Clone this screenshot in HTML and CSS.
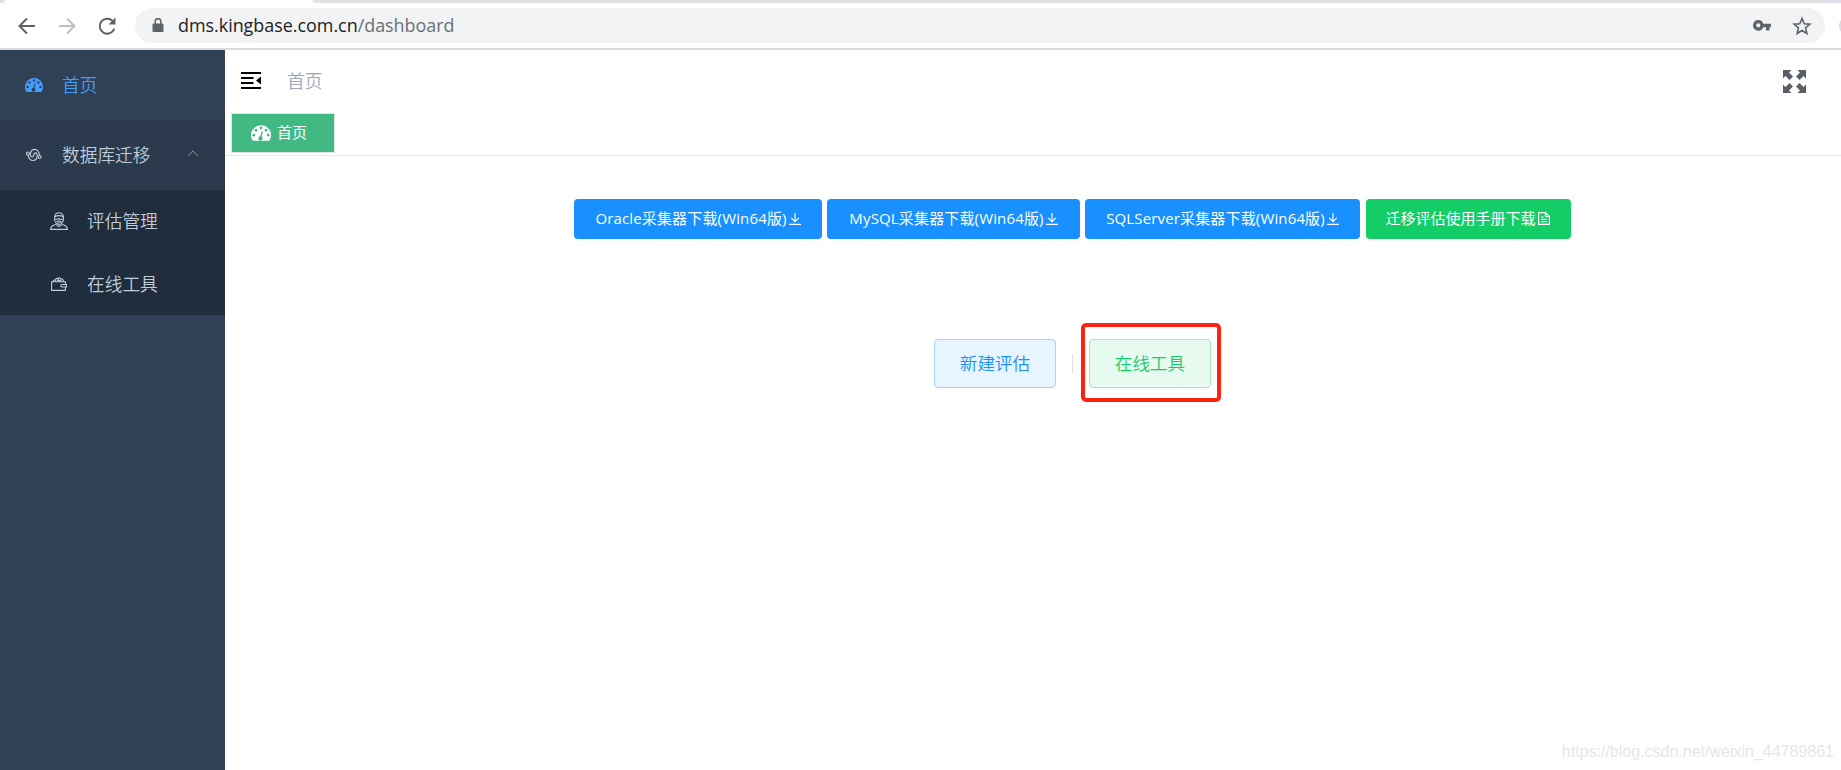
FILE: index.html
```
<!DOCTYPE html>
<html lang="zh-CN">
<head>
  <meta charset="UTF-8">
  <title>首页</title>
  <link rel="stylesheet" href="styles.css">
</head>
<body>

  <!-- shared icons -->
  <svg class="sprite" width="0" height="0">
    <symbol id="dashboard" viewBox="0 0 128 100">
      <path fill="currentColor" fill-rule="evenodd" d="M64 0A64 64 0 0 0 10 98q1 2 4 2h100q3 0 4-2A64 64 0 0 0 64 0zM18 55a9 9 0 1 1 0 18a9 9 0 0 1 0-18zM32 23a9 9 0 1 1 0 18a9 9 0 0 1 0-18zM64 9a9 9 0 1 1 0 18a9 9 0 0 1 0-18zM96 23a9 9 0 1 1 0 18a9 9 0 0 1 0-18zM110 55a9 9 0 1 1 0 18a9 9 0 0 1 0-18zM71 39q5 1 4 6l-7 27c6 4 8 10 6 15a14 14 0 1 1-14-17l7-27q1-4 4-4z"/>
    </symbol>
    <symbol id="download" viewBox="0 0 12 12">
      <path fill="none" stroke="currentColor" stroke-width="1.2" d="M6 0v8.400M2.200 4.800L6 8.600l3.800-3.800M0 11.300h12"/>
    </symbol>
  </svg>

  <header class="browser">
    <div class="tab-strip"><div class="tab"></div></div>
    <div class="toolbar">
      <svg class="nav-icon" viewBox="0 0 20 20"><path d="M18 10H3M10 2.500L2.500 10l7.500 7.500"/></svg>
      <svg class="nav-icon disabled" viewBox="0 0 20 20"><path d="M2 10h15M10 2.500L17.500 10 10 17.500"/></svg>
      <svg class="nav-icon" viewBox="0 0 20 20"><path d="M17.300 12.700A7.500 7.500 0 1 1 15.500 4.800"/><path class="solid" d="M18.500 1.500v7h-7z"/></svg>
      <div class="address">
        <svg class="lock" viewBox="0 0 12 15"><path fill="#5f6368" d="M1.500 5.500h9q1 0 1 1v6.500q0 1-1 1h-9q-1 0-1-1V6.500q0-1 1-1z"/><path fill="none" stroke="#5f6368" stroke-width="1.500" d="M3.200 6V3.500a2.800 2.800 0 0 1 5.600 0V6"/></svg>
        <span class="url">dms.kingbase.com.cn<span>/dashboard</span></span>
        <svg class="key" viewBox="0 0 18 11"><path fill="#5f6368" fill-rule="evenodd" d="M5.300 0a5.300 5.300 0 0 1 5 3.700H18v3.600h-1.500V10.500H13V7.300h-2.700A5.300 5.300 0 1 1 5.300 0zM5.300 3.200a2.100 2.100 0 1 0 0 4.200a2.100 2.100 0 0 0 0-4.200z"/></svg>
        <svg class="star" viewBox="0 0 20 20"><path fill="none" stroke="#5f6368" stroke-width="1.600" d="M10 2.400l2.200 5.300 5.700.5-4.300 3.700 1.300 5.600-4.900-3-4.900 3 1.300-5.600L2.100 8.200l5.700-.5z"/></svg>
      </div>
      <div class="profile"></div>
    </div>
  </header>

  <div class="app">
    <aside class="sidebar">
      <a class="menu-item active">
        <svg class="menu-icon"><use href="#dashboard"/></svg>
        <span>首页</span>
      </a>
      <a class="menu-item opened">
        <svg class="menu-icon" viewBox="0 0 18 14"><g fill="none" stroke="currentColor" stroke-width="1.200"><circle cx="2.900" cy="5.500" r="1.500"/><circle cx="14.600" cy="9" r="1.500"/><path d="M3 7c.5 3 2.500 5.500 5.200 5.500 2.600 0 4.300-2.500 4.100-5.500-.2-2.500-2.600-2.800-3.300-.8C8.500 8 8.600 9 7.300 9 5.700 9 5 7.500 5.300 5.800 5.800 3 7.500 1.400 9.500 1.400c2.800 0 4.700 2.500 5.100 6"/></g></svg>
        <span>数据库迁移</span>
        <svg class="chevron" viewBox="0 0 12 7"><path fill="none" stroke="currentColor" d="M.700 6.200L6 .9l5.300 5.300"/></svg>
      </a>
      <div class="submenu">
        <a class="menu-item">
          <svg class="menu-icon user" viewBox="0 0 18 18"><g fill="none" stroke="currentColor" stroke-width="1.100"><path d="M4.500 6c-.5-7 9.500-7 9 0 0 4-2 6.500-4.500 6.500S4.500 10 4.500 6zM4.500 5c3-1.800 6-1.800 9 0M5 7.200h3l1-.7 1 .7h3M6.500 10.200C8 8.500 10 8.500 11.500 10.200M7.500 10.700h3M6.500 11.500c-.2 2-5.900.8-5.900 5.900h16.800c0-5.100-5.700-3.900-5.900-5.900M6.500 13.200q2.500 2.500 5 0"/></g></svg>
          <span>评估管理</span>
        </a>
        <a class="menu-item">
          <svg class="menu-icon wallet" viewBox="0 0 16 14"><g fill="none" stroke="currentColor" stroke-width="1.100"><path d="M14.400 7.500V4.700H.600v8.700h13.800V10M15.500 7.500h-4.500a1.200 1.200 0 0 0 0 2.500h4.500zM2 4.500c.5-2 2-2 2.800-.5M4.500 3C5 .9 7 1 7.500 2.500M7 1.700c1-1.500 2.800-.7 2.700.8M9.500 2c1.500-.7 2.800.5 3 2.300M6 4l1.500-1L9 4l1.500-1"/></g></svg>
          <span>在线工具</span>
        </a>
      </div>
    </aside>

    <main class="main">
      <div class="navbar">
        <svg class="hamburger" viewBox="0 0 20 17"><path fill="none" stroke="#000" stroke-width="2" d="M0 1h20M0 6h12.500M0 11h12.500M0 16h20"/><path d="M20 4.500v8l-5-4z"/></svg>
        <span class="breadcrumb">首页</span>
        <svg class="fullscreen" viewBox="0 0 23 23"><path fill="#5a5e66" d="M0 0h8.500L6 2.500l4 4L6.500 10l-4-4L0 8.500zM23 0v8.500L20.500 6l-4 4L13 6.500l4-4L14.500 0zM0 23v-8.500L2.500 17l4-4 3.500 3.500-4 4L8.500 23zM23 23h-8.500l2.500-2.500-4-4 3.500-3.500 4 4 2.500-2.500z"/></svg>
      </div>
      <div class="tags">
        <a class="tag"><svg><use href="#dashboard"/></svg><span>首页</span></a>
      </div>

      <div class="downloads">
        <button class="btn oracle"><span>Oracle采集器下载(Win64版)</span><svg><use href="#download"/></svg></button>
        <button class="btn mysql"><span>MySQL采集器下载(Win64版)</span><svg><use href="#download"/></svg></button>
        <button class="btn sqlserver"><span>SQLServer采集器下载(Win64版)</span><svg><use href="#download"/></svg></button>
        <button class="btn manual"><span>迁移评估使用手册下载</span><svg viewBox="0 0 12 13"><path fill="none" stroke="currentColor" stroke-width="1.200" d="M.600.600H7.500l3.900 3.900v7.900H.600zM7.500.600v3.900h3.900M3 5h2.500M3 7.300h6M3 9.700h6"/></svg></button>
      </div>

      <div class="actions">
        <button class="plain primary">新建评估</button>
        <i class="divider"></i>
        <div class="highlight">
          <button class="plain success">在线工具</button>
        </div>
      </div>

      <div class="watermark">https://blog.csdn.net/weixin_44789861</div>
    </main>
  </div>

</body>
</html>
```
FILE: styles.css
```
* {
  box-sizing: border-box;
}

body {
  margin: 0;
  height: 770px;
  overflow: hidden;
  background: #fff;
  font-family: "Open Sans", "Noto Sans CJK SC", sans-serif;
  font-size: 17.7px;
}

svg {
  display: block;
  flex: none;
}

.sprite {
  position: absolute;
}

.browser {
  height: 50px;
  border-bottom: 2px solid #dadce0;
}

.tab-strip {
  height: 3px;
  background: #dee1e6;
}

.tab {
  width: 310px;
  height: 3px;
  margin-left: 4px;
  background: #fff;
  border-radius: 3px 3px 0 0;
}

.toolbar {
  display: flex;
  align-items: center;
  height: 45px;
  padding-left: 17px;
}

.nav-icon {
  width: 20px;
  height: 20px;
  margin-right: 20px;
  fill: none;
  stroke: #5f6368;
  stroke-width: 2;
}

.nav-icon.disabled {
  stroke: #bdbfc1;
}

.nav-icon .solid {
  fill: #5f6368;
  stroke: none;
}

.address {
  display: flex;
  align-items: center;
  flex: none;
  width: 1690px;
  height: 35px;
  margin-left: -2px;
  padding: 0 13px 0 17px;
  background: #f1f3f4;
  border-radius: 18px;
}

.lock {
  width: 12px;
  height: 15px;
  margin-right: 14px;
}

.url {
  flex: 1;
  padding-bottom: 2px;
  color: #202124;
  font-size: 17.9px;
}

.url span {
  color: #6b6f73;
}

.key {
  width: 18px;
  height: 11px;
  margin-right: 21px;
}

.star {
  width: 20px;
  height: 20px;
}

.profile {
  flex: none;
  width: 20px;
  height: 20px;
  margin-left: 14px;
  border-radius: 50%;
  background: #dadce0;
}

.app {
  display: flex;
  height: 720px;
}

.sidebar {
  flex: none;
  width: 225px;
  background: #304156;
  font-weight: 350;
}

.menu-item {
  display: flex;
  align-items: center;
  height: 70px;
  padding: 0 26px 0 25px;
  color: #bfcbd9;
}

.menu-item span {
  padding-bottom: 2px;
}

.menu-item.active {
  color: #409eff;
}

.menu-item.opened {
  background: #2b3a4d;
}

.menu-icon {
  width: 18px;
  height: 14px;
  margin-right: 19px;
}

.submenu {
  height: 125px;
  background: #1f2d3d;
}

.submenu .menu-item {
  height: 62.5px;
  padding-left: 50px;
}

.menu-icon.user {
  height: 18px;
}

.menu-icon.wallet {
  width: 16px;
  margin: 0 20px 0 1px;
}

.chevron {
  width: 12px;
  height: 7px;
  margin: 0 0 3px auto;
  color: #909399;
}

.main {
  position: relative;
  flex: 1;
}

.navbar {
  display: flex;
  align-items: center;
  height: 62px;
  padding: 0 35px 0 16px;
}

.hamburger {
  width: 20px;
  height: 17px;
  margin: 0 26px 1px 0;
}

.breadcrumb {
  padding-bottom: 3px;
  color: #97a8be;
  font-weight: 350;
}

.fullscreen {
  width: 23px;
  height: 23px;
  margin-left: auto;
}

.tags {
  height: 44px;
  padding: 1px 0 0 6px;
  border-bottom: 1px solid #e8eaee;
}

.tag {
  display: flex;
  align-items: center;
  width: 104px;
  height: 40px;
  padding-left: 19px;
  background: #42b983;
  border: 1px solid #e0e3ea;
  color: #fff;
  font-size: 15px;
}

.tag span {
  padding-bottom: 3px;
}

.tag svg {
  width: 20px;
  height: 16px;
  margin-right: 6px;
}

.downloads {
  display: flex;
  gap: 5px;
  margin: 43px 0 0 349px;
}

.btn {
  display: flex;
  align-items: center;
  justify-content: center;
  height: 40px;
  padding: 0;
  border: 0;
  border-radius: 4px;
  background: #1890ff;
  color: #fff;
  font-family: inherit;
  font-size: 15px;
  letter-spacing: 0.15px;
  white-space: nowrap;
}

.btn span {
  padding-bottom: 3px;
}

.btn svg {
  width: 12px;
  height: 12px;
  margin: 0 0 1px 2px;
}

.oracle {
  width: 248px;
}

.mysql {
  width: 253px;
}

.sqlserver {
  width: 275px;
}

.manual {
  width: 205px;
  margin-left: 1px;
  padding-right: 2px;
  background: #13ce66;
  letter-spacing: 0;
}

.manual svg {
  height: 13px;
}

.actions {
  display: flex;
  align-items: center;
  margin: 84px 0 0 709px;
}

.plain {
  display: block;
  width: 122px;
  height: 49px;
  padding: 0 0 2px;
  border: 1px solid #a3d3ff;
  border-radius: 4px;
  background: #e8f4ff;
  color: #1890ff;
  font-family: inherit;
  font-size: 17.6px;
  font-weight: 350;
}

.plain.primary {
  margin-top: 1px;
}

.plain.success {
  border-color: #a1ebc2;
  background: #e7faf0;
  color: #13ce66;
}

.divider {
  width: 1px;
  height: 20px;
  margin: 2px 8px 0 16px;
  background: #dcdfe6;
}

.highlight {
  padding: 12px 6px 10px 4px;
  border: 4px solid #ff2212;
  border-radius: 5px;
}

.watermark {
  position: absolute;
  right: 7px;
  bottom: 9px;
  color: #e6e6e6;
  font-family: "Liberation Sans", sans-serif;
  font-size: 16px;
}
```
